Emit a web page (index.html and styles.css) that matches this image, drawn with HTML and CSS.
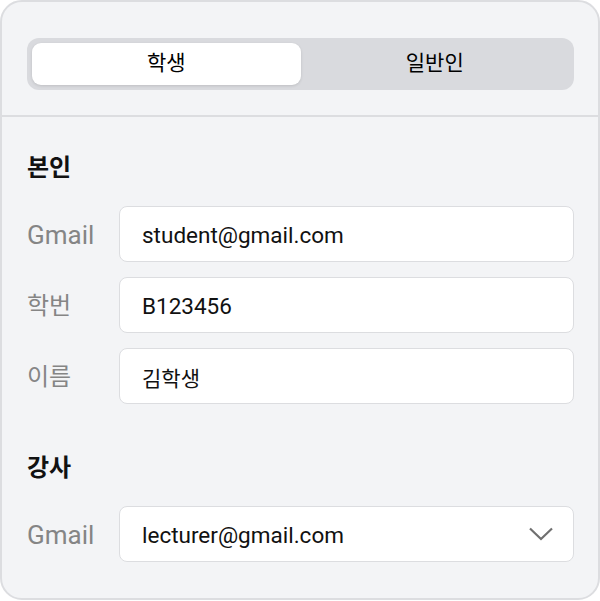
FILE: index.html
```html
<!DOCTYPE html>
<html lang="ko">
<head>
<meta charset="utf-8">
<link rel="stylesheet" href="styles.css">
</head>
<body>
<div class="card">
  <div class="header">
    <div class="segment">
      <div class="seg active">학생</div>
      <div class="seg">일반인</div>
    </div>
  </div>
  <div class="body">
    <h2 class="heading">본인</h2>
    <div class="rows">
      <div class="row"><span class="label">Gmail</span><div class="field">student@gmail.com</div></div>
      <div class="row"><span class="label ko">학번</span><div class="field">B123456</div></div>
      <div class="row"><span class="label ko">이름</span><div class="field ko">김학생</div></div>
    </div>
    <h2 class="heading second">강사</h2>
    <div class="rows">
      <div class="row"><span class="label">Gmail</span><div class="field select"><span>lecturer@gmail.com</span>
        <svg class="chev" width="24" height="14" viewBox="0 0 24 14"><path d="M1 1.5 L12 12 L23 1.5" fill="none" stroke="#707070" stroke-width="2.2"/></svg>
      </div></div>
    </div>
  </div>
</div>
</body>
</html>
```
FILE: styles.css
```css
* { box-sizing: border-box; }
html, body { margin: 0; padding: 0; background: #ffffff; }
body {
  font-family: Roboto, "Noto Sans CJK KR", sans-serif;
  color: #111;
}
.card {
  width: 600px;
  height: 600px;
  border: 2px solid #dcdde0;
  border-radius: 22px;
  background: #f3f4f6;
  overflow: hidden;
}
.header {
  padding: 36px 24px 25px 25px;
  border-bottom: 2px solid #dcdde0;
}
.segment {
  display: flex;
  background: #d9dade;
  border-radius: 12px;
  padding: 5px;
  height: 52px;
}
.seg {
  flex: 1;
  display: flex;
  align-items: center;
  justify-content: center;
  font-size: 21px;
  font-weight: 400;
  line-height: 1;
  padding-bottom: 1px;
  color: #000;
  border-radius: 9px;
}
.seg.active {
  background: #ffffff;
  box-shadow: 0 1px 3px rgba(0,0,0,0.12);
}
.body {
  padding: 36px 24px 0 25px;
}
.heading {
  margin: 0;
  font-size: 24px;
  line-height: 30px;
  font-weight: 700;
  color: #111;
}
.heading.second { margin-top: 49px; }
.rows {
  margin-top: 23px;
  display: flex;
  flex-direction: column;
  gap: 15px;
}
.row {
  display: flex;
  align-items: center;
  gap: 16px;
}
.label {
  width: 76px;
  font-size: 26px;
  line-height: 30px;
  padding-top: 2px;
  color: #858585;
}
.label.ko { font-size: 24px; }
.field {
  flex: 1;
  height: 56px;
  background: #fff;
  border: 1.5px solid #dcdde0;
  border-radius: 8px;
  padding: 1px 22px 0;
  display: flex;
  align-items: center;
  font-size: 22.5px;
  color: #111;
}
.field.ko { font-size: 21px; }
.select { justify-content: space-between; padding-right: 20px; }
.chev { display: block; margin-top: -1px; }
```
